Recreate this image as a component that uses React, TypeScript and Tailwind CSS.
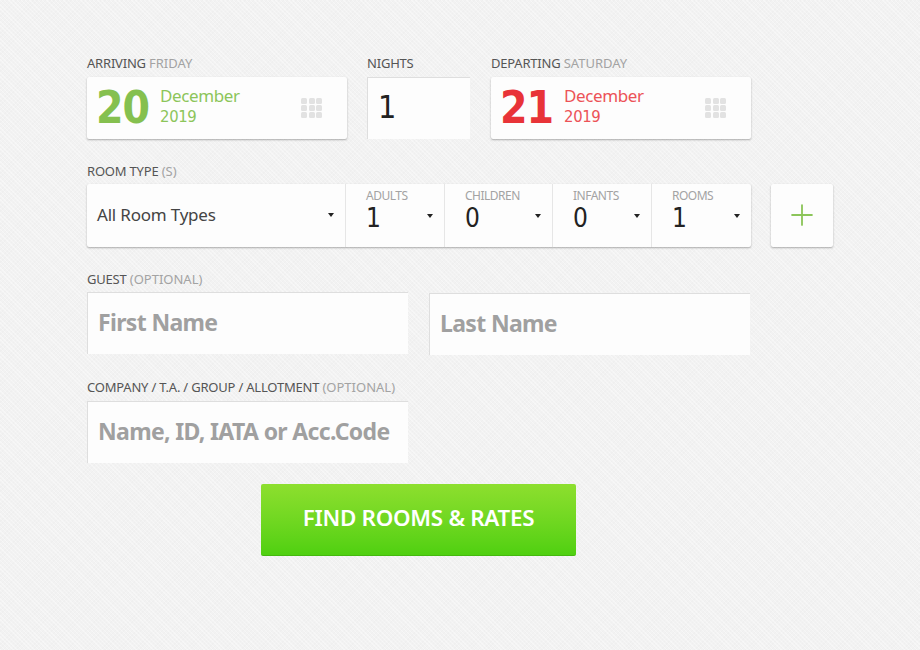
import { Plus } from "lucide-react";

const font = "font-['Noto_Sans',sans-serif]";
// digits in the reference have a footed 1
const digits = "font-['DejaVu_Sans_Condensed','DejaVu_Sans',sans-serif]";

function Label({ main, sub }: { main: string; sub?: string }) {
  return (
    <div className="h-[14px] text-[13px] leading-[14px] tracking-[-0.2px] text-[#555] whitespace-nowrap">
      {main} {sub && <span className="text-[#a3a3a3] tracking-[0px]">{sub}</span>}
    </div>
  );
}

function Caret({ className }: { className?: string }) {
  return <span className={`w-0 h-0 border-x-[3px] border-x-transparent border-t-[4px] border-t-[#222] ${className ?? ""}`} />;
}

function CalendarDots() {
  return (
    <div className="grid grid-cols-3 gap-[1px] w-[22px]">
      {Array.from({ length: 9 }).map((_, i) => (
        <span key={i} className="w-[6px] h-[6px] rounded-[1.5px] bg-[#e2e2e2]" />
      ))}
    </div>
  );
}

function DateCard({ day, month, year, dayColor, textColor }: { day: string; month: string; year: string; dayColor: string; textColor: string }) {
  return (
    <div className="w-[260px] h-[62px] mt-[7px] bg-[#fdfdfd] rounded-[2px] shadow-[0_1px_2px_rgba(0,0,0,0.3)] flex items-center pl-[9px] pr-[24px]">
      <span className={`${digits} text-[44px] leading-none font-bold tracking-[-1px] ${dayColor}`}>{day}</span>
      <div className={`ml-[11px] mb-[4px] text-[17px] leading-[21px] tracking-[-0.4px] ${textColor}`}>
        <div>{month}</div>
        <div className={`${digits} text-[16.5px]`}>{year}</div>
      </div>
      <div className="ml-auto">
        <CalendarDots />
      </div>
    </div>
  );
}

function Counter({ label, value, width }: { label: string; value: string; width: string }) {
  return (
    <div className={`${width} h-full border-l-[1px] border-[#e6e6e6] pl-[20px] pr-[11px]`}>
      <div className="pt-[5px] text-[12px] leading-[14px] tracking-[-0.5px] text-[#a3a3a3]">{label}</div>
      <div className="mt-[2px] flex items-center justify-between">
        <div className={`${digits} text-[26px] leading-[26px] text-[#222]`}>{value}</div>
        <Caret className="mb-[4px]" />
      </div>
    </div>
  );
}

function TextField({ placeholder, className }: { placeholder: string; className?: string }) {
  return (
    <input
      readOnly
      placeholder={placeholder}
      className={`w-[321px] h-[62px] bg-[#fdfdfd] border-l border-t border-[#dedede] pl-[10px] pb-[3px] text-[23px] font-bold tracking-[-0.65px] outline-none placeholder:text-[#a0a0a0] ${className ?? ""}`}
    />
  );
}

export default function App() {
  return (
    <div className={`${font} w-[920px] h-[650px] overflow-hidden pt-[56px] pl-[87px] bg-[#f2f2f2] bg-[repeating-linear-gradient(45deg,rgba(255,255,255,0.35)_0,rgba(255,255,255,0.35)_1px,transparent_1px,transparent_3px),repeating-linear-gradient(-45deg,rgba(0,0,0,0.012)_0,rgba(0,0,0,0.012)_1px,transparent_1px,transparent_3px)]`}>
      <div className="flex">
        <div>
          <Label main="ARRIVING" sub="FRIDAY" />
          <DateCard day="20" month="December" year="2019" dayColor="text-[#85c04f]" textColor="text-[#8cc55a]" />
        </div>
        <div className="ml-[20px]">
          <Label main="NIGHTS" />
          <div className={`${digits} w-[103px] h-[62px] mt-[7px] bg-[#fdfdfd] border-l border-t border-[#dedede] pl-[10px] pb-[3px] flex items-center text-[32px] text-[#222]`}>1</div>
        </div>
        <div className="ml-[21px]">
          <Label main="DEPARTING" sub="SATURDAY" />
          <DateCard day="21" month="December" year="2019" dayColor="text-[#e83338]" textColor="text-[#ec5257]" />
        </div>
      </div>

      <div className="mt-[25px]">
        <Label main="ROOM TYPE" sub="(S)" />
        <div className="flex mt-[6px] gap-[20px]">
          <div className="w-[664px] h-[63px] bg-[#fdfdfd] rounded-[2px] shadow-[0_1px_2px_rgba(0,0,0,0.3)] flex">
            <div className="w-[258px] flex items-center justify-between pl-[10px] pr-[11px] pb-[2px]">
              <span className="text-[17px] tracking-[-0.2px] text-[#444]">All Room Types</span>
              <Caret />
            </div>
            <Counter label="ADULTS" value="1" width="w-[99px]" />
            <Counter label="CHILDREN" value="0" width="w-[108px]" />
            <Counter label="INFANTS" value="0" width="w-[99px]" />
            <Counter label="ROOMS" value="1" width="w-[100px]" />
          </div>
          <div className="w-[62px] h-[63px] pb-[2px] bg-[#fdfdfd] rounded-[2px] shadow-[0_1px_2px_rgba(0,0,0,0.3)] flex items-center justify-center">
            <Plus className="w-[34px] h-[34px] text-[#8cc55a]" strokeWidth={1.3} />
          </div>
        </div>
      </div>

      <div className="mt-[25px]">
        <Label main="GUEST" sub="(OPTIONAL)" />
        <div className="flex mt-[6px] gap-[21px] items-start">
          <TextField placeholder="First Name" />
          <TextField placeholder="Last Name" className="mt-[1px]" />
        </div>
      </div>

      <div className="mt-[25px]">
        <Label main="COMPANY / T.A. / GROUP / ALLOTMENT" sub="(OPTIONAL)" />
        <div className="mt-[7px]">
          <TextField placeholder="Name, ID, IATA or Acc.Code" />
        </div>
      </div>

      <button className="block ml-[174px] mt-[21px] w-[315px] h-[72px] pb-[3px] rounded-[2px] bg-gradient-to-b from-[#8ddf2e] to-[#4fd010] border-b border-[#45b80e] text-white font-semibold text-[22.4px] tracking-[-0.3px]">
        FIND ROOMS &amp; RATES
      </button>
    </div>
  );
}
